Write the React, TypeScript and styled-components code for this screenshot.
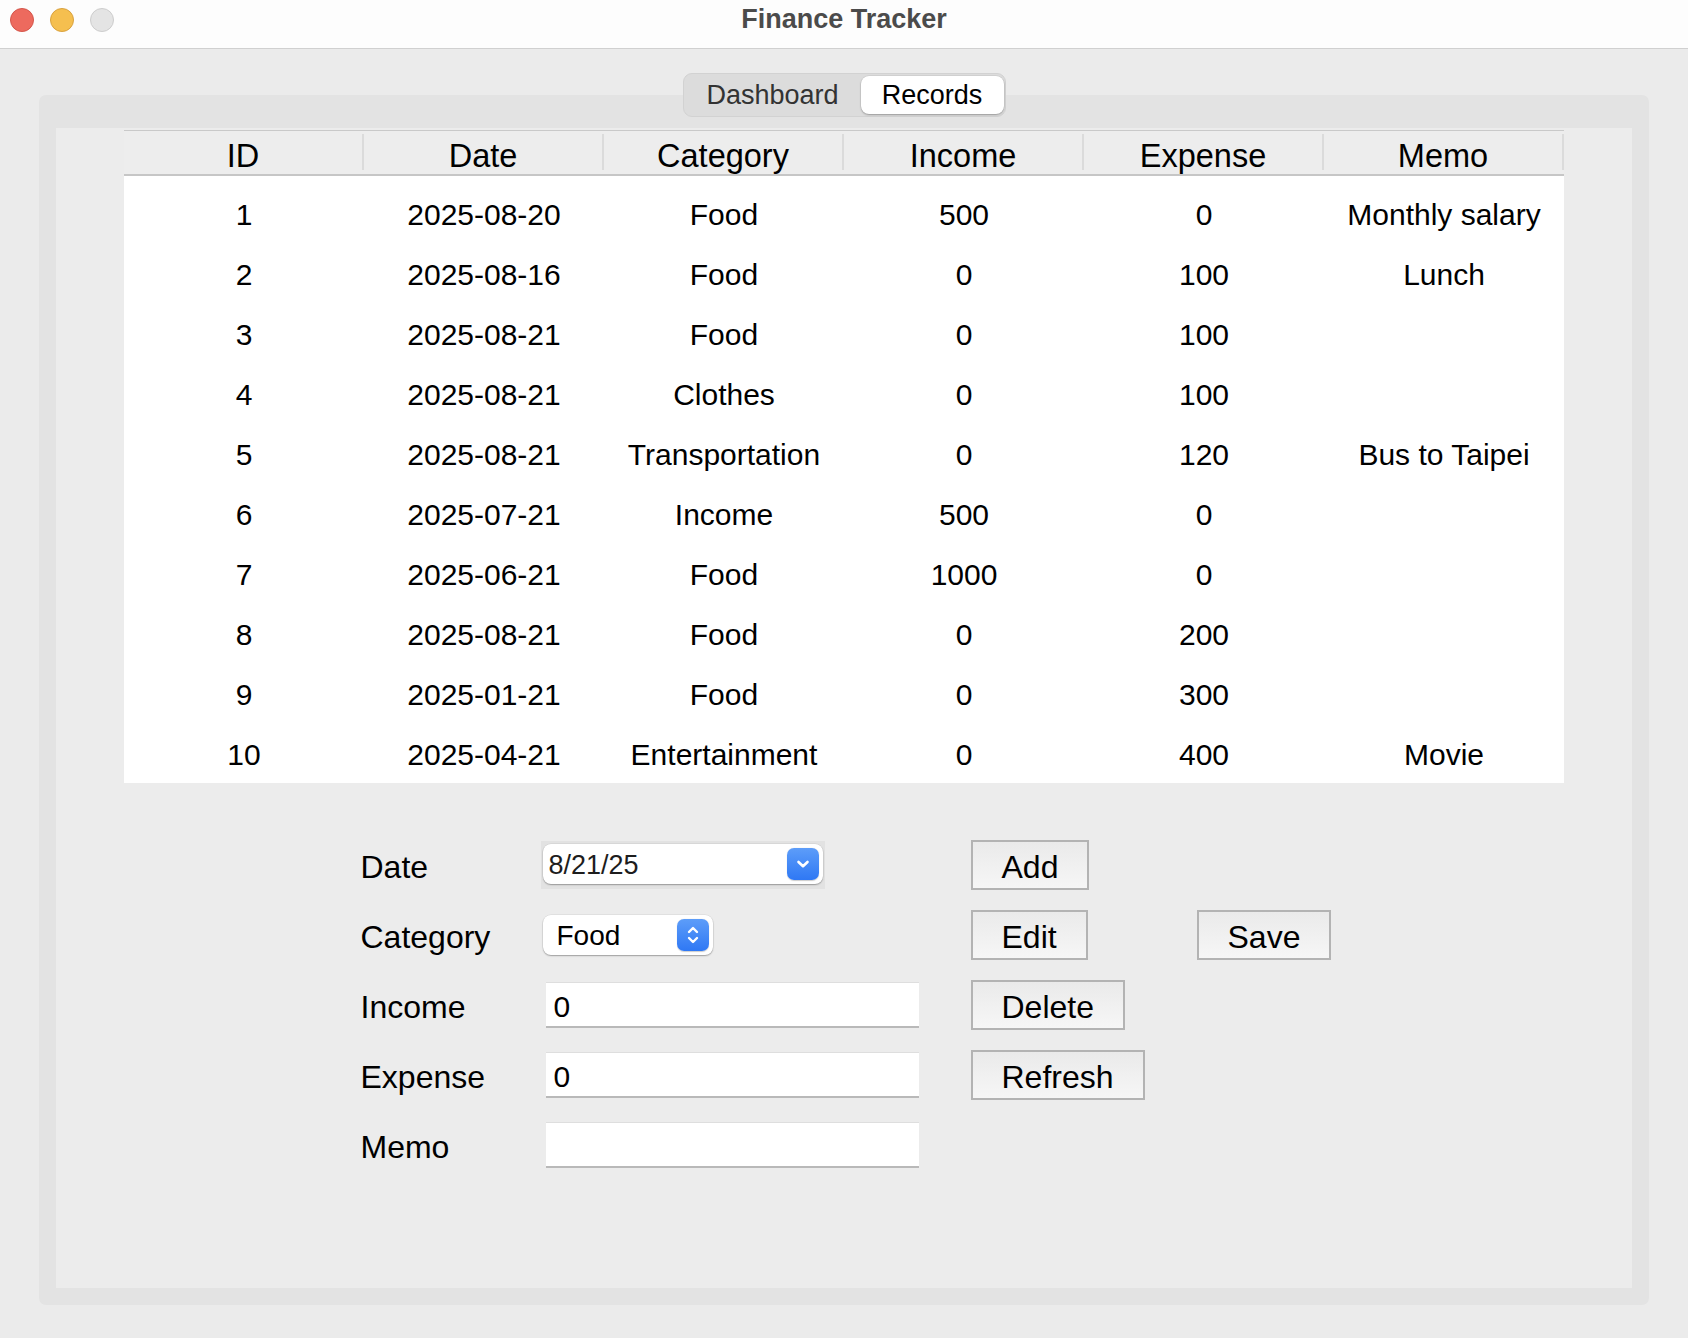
import React from 'react'
import styled, { createGlobalStyle } from 'styled-components'

const GlobalStyle = createGlobalStyle`
  html, body {
    margin: 0;
    padding: 0;
  }

  body {
    background: #ebebeb;
    font-family: 'Liberation Sans', Arial, Helvetica, sans-serif;
    color: #000;
  }

  * {
    box-sizing: border-box;
  }
`

const columns = ['ID', 'Date', 'Category', 'Income', 'Expense', 'Memo']

const records = [
  { id: 1, date: '2025-08-20', category: 'Food', income: 500, expense: 0, memo: 'Monthly salary' },
  { id: 2, date: '2025-08-16', category: 'Food', income: 0, expense: 100, memo: 'Lunch' },
  { id: 3, date: '2025-08-21', category: 'Food', income: 0, expense: 100, memo: '' },
  { id: 4, date: '2025-08-21', category: 'Clothes', income: 0, expense: 100, memo: '' },
  { id: 5, date: '2025-08-21', category: 'Transportation', income: 0, expense: 120, memo: 'Bus to Taipei' },
  { id: 6, date: '2025-07-21', category: 'Income', income: 500, expense: 0, memo: '' },
  { id: 7, date: '2025-06-21', category: 'Food', income: 1000, expense: 0, memo: '' },
  { id: 8, date: '2025-08-21', category: 'Food', income: 0, expense: 200, memo: '' },
  { id: 9, date: '2025-01-21', category: 'Food', income: 0, expense: 300, memo: '' },
  { id: 10, date: '2025-04-21', category: 'Entertainment', income: 0, expense: 400, memo: 'Movie' },
]

const ChevronDown = () => (
  <svg width="14" height="10" viewBox="0 0 14 10">
    <path d="M2.5 3 L7 7.2 L11.5 3" fill="none" stroke="#fff" strokeWidth="2.6" strokeLinecap="round" strokeLinejoin="round" />
  </svg>
)

const UpDown = () => (
  <svg width="14" height="24" viewBox="0 0 14 24">
    <path d="M3 9 L7 5 L11 9" fill="none" stroke="#fff" strokeWidth="2.4" strokeLinecap="round" strokeLinejoin="round" />
    <path d="M3 15 L7 19 L11 15" fill="none" stroke="#fff" strokeWidth="2.4" strokeLinecap="round" strokeLinejoin="round" />
  </svg>
)

const App: React.FC = () => {
  return (
    <Window>
      <GlobalStyle />
      <TitleBar>
        <Lights>
          <Light $fill="#ed6a5e" $edge="#d4564b" />
          <Light $fill="#f5bf4f" $edge="#d9a23f" />
          <Light $fill="#e4e4e4" $edge="#cdcdcd" />
        </Lights>
        <Title>Finance Tracker</Title>
        <span />
      </TitleBar>
      <Content>
        <Panel>
          <TabBar>
            <Tab>Dashboard</Tab>
            <Tab $active>Records</Tab>
          </TabBar>
          <Page>
            <Table>
              <HeaderRow>
                {columns.map((c) => (
                  <HeaderCell key={c}>{c}</HeaderCell>
                ))}
              </HeaderRow>
              <Body>
                {records.map((r) => (
                  <Row key={r.id}>
                    <Cell>{r.id}</Cell>
                    <Cell>{r.date}</Cell>
                    <Cell>{r.category}</Cell>
                    <Cell>{r.income}</Cell>
                    <Cell>{r.expense}</Cell>
                    <Cell>{r.memo}</Cell>
                  </Row>
                ))}
              </Body>
            </Table>

            <Form>
              <Label $area="dl">Date</Label>
              <DateWrap $area="dp">
                <DateBox>
                  <DateText>8/21/25</DateText>
                  <BlueButton>
                    <ChevronDown />
                  </BlueButton>
                </DateBox>
              </DateWrap>
              <Button $area="add">Add</Button>

              <Label $area="cl">Category</Label>
              <SelectBox $area="cs">
                <SelectText>Food</SelectText>
                <BlueButton>
                  <UpDown />
                </BlueButton>
              </SelectBox>
              <Button $area="edit">Edit</Button>
              <Button $area="save">Save</Button>

              <Label $area="il">Income</Label>
              <Input $area="ii" defaultValue="0" />
              <Button $area="del">Delete</Button>

              <Label $area="el">Expense</Label>
              <Input $area="ei" defaultValue="0" />
              <Button $area="ref">Refresh</Button>

              <Label $area="ml">Memo</Label>
              <Input $area="mi" defaultValue="" />
            </Form>
          </Page>
        </Panel>
      </Content>
    </Window>
  )
}

const Window = styled.div`
  height: 100vh;
  display: flex;
  flex-direction: column;
`

const TitleBar = styled.header`
  height: 49px;
  flex-shrink: 0;
  display: grid;
  grid-template-columns: 1fr auto 1fr;
  align-items: center;
  background: #fdfdfd;
  border-bottom: 1px solid #d0d0d0;
`

const Lights = styled.div`
  display: flex;
  gap: 16px;
  padding-left: 10px;
  margin-top: -9px;
`

const Light = styled.span<{ $fill: string; $edge: string }>`
  width: 24px;
  height: 24px;
  border-radius: 50%;
  background: ${(p) => p.$fill};
  border: 1px solid ${(p) => p.$edge};
`

const Title = styled.div`
  font-size: 27px;
  font-weight: 700;
  color: #4b4b4b;
  margin-top: -10px;
`

const Content = styled.main`
  flex: 1;
  display: flex;
  flex-direction: column;
  padding: 46px 39px 33px;
`

const Panel = styled.section`
  flex: 1;
  display: flex;
  flex-direction: column;
  background: #e3e3e3;
  border-radius: 7px;
  padding: 0 17px 17px;
`

const TabBar = styled.nav`
  align-self: center;
  display: flex;
  height: 44px;
  margin: -22px 0 11px;
  padding: 2px 1px;
  background: #dcdcdc;
  border: 1px solid #d2d2d2;
  border-radius: 9px;
`

const Tab = styled.div<{ $active?: boolean }>`
  display: flex;
  align-items: center;
  justify-content: center;
  width: ${(p) => (p.$active ? '143px' : '176px')};
  font-size: 27px;
  color: ${(p) => (p.$active ? '#000' : '#333')};
  background: ${(p) => (p.$active ? '#fff' : 'transparent')};
  border-radius: 8px;
  box-shadow: ${(p) => (p.$active ? '0 1px 2px rgba(0,0,0,0.28), 0 0 0 0.5px rgba(0,0,0,0.08)' : 'none')};
`

const Page = styled.div`
  flex: 1;
  display: flex;
  flex-direction: column;
  align-items: center;
  background: #ececec;
  padding-top: 2px;
`

const Table = styled.div`
  width: 1440px;
`

const HeaderRow = styled.div`
  display: grid;
  grid-template-columns: repeat(6, 240px);
  background: #ededed;
  border-top: 1px solid #c9c9c9;
  border-bottom: 2px solid #c6c6c6;
  padding: 3px 0 4px;
`

const HeaderCell = styled.div`
  height: 36px;
  display: flex;
  align-items: center;
  justify-content: center;
  padding-top: 8px;
  font-size: 32.5px;
  border-right: 2px solid #dbdbdb;
`

const Body = styled.div`
  background: #fff;
  padding-top: 7px;
`

const Row = styled.div`
  display: grid;
  grid-template-columns: repeat(6, 240px);
  height: 60px;
  align-items: center;
`

const Cell = styled.div`
  text-align: center;
  font-size: 30px;
  padding-top: 4px;
  white-space: nowrap;
`

const Form = styled.div`
  margin-top: 47px;
  display: grid;
  grid-template-columns: 181px 380px 50px 226px 132px;
  grid-auto-rows: 70px;
  align-items: center;
  justify-items: start;
  grid-template-areas:
    'dl dp . add .'
    'cl cs . edit save'
    'il ii . del .'
    'el ei . ref .'
    'ml mi . . .';
`

const Label = styled.div<{ $area: string }>`
  grid-area: ${(p) => p.$area};
  font-size: 32px;
  padding: 5px 0 0 1px;
`

const DateWrap = styled.div<{ $area: string }>`
  grid-area: ${(p) => p.$area};
  background: #e2e2e2;
  padding: 3px 2px 5px;
`

const DateBox = styled.div`
  width: 280px;
  height: 40px;
  display: flex;
  align-items: center;
  justify-content: space-between;
  padding: 0 4px 0 6px;
  background: #fff;
  border-radius: 8px;
  box-shadow: 0 1px 1.5px rgba(0, 0, 0, 0.3), 0 0 0 0.5px rgba(0, 0, 0, 0.08);
`

const DateText = styled.span`
  font-size: 27px;
  color: #1d1d1d;
  padding-top: 2px;
`

const BlueButton = styled.span`
  width: 32px;
  height: 32px;
  display: flex;
  align-items: center;
  justify-content: center;
  border-radius: 7px;
  background: linear-gradient(#5d9df9, #2f78f4);
  box-shadow: 0 0.5px 1px rgba(0, 0, 0, 0.2);
`

const SelectBox = styled.div<{ $area: string }>`
  grid-area: ${(p) => p.$area};
  margin-left: 2px;
  width: 170px;
  height: 40px;
  display: flex;
  align-items: center;
  justify-content: space-between;
  padding: 0 4px 0 14px;
  background: #fff;
  border-radius: 8px;
  box-shadow: 0 1px 1.5px rgba(0, 0, 0, 0.3), 0 0 0 0.5px rgba(0, 0, 0, 0.08);
`

const SelectText = styled.span`
  font-size: 28px;
  padding-top: 2px;
`

const Input = styled.input<{ $area: string }>`
  grid-area: ${(p) => p.$area};
  margin-left: 5px;
  width: 373px;
  height: 46px;
  padding: 4px 8px 0;
  font: inherit;
  font-size: 30px;
  color: #000;
  background: #fff;
  border: none;
  border-top: 1px solid #dedede;
  border-bottom: 2px solid #b9b9b9;
  border-radius: 0;
  outline: none;
`

const Button = styled.button<{ $area: string }>`
  grid-area: ${(p) => p.$area};
  height: 50px;
  padding: 4px 29px 0;
  font: inherit;
  font-size: 32px;
  color: #000;
  background: linear-gradient(#eaeaea, #f6f6f6);
  border: 2px solid #b3b3b3;
  border-radius: 0;
  cursor: pointer;
`

export default App
